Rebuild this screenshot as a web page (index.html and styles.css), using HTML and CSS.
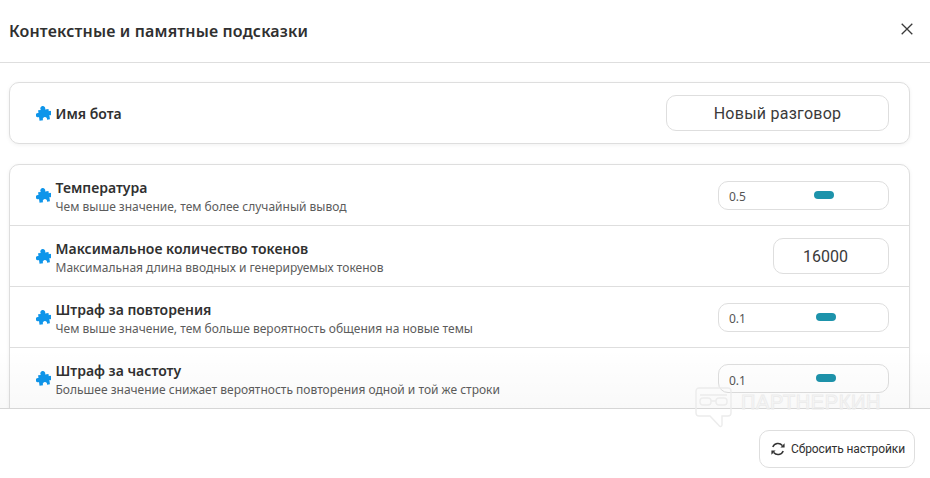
FILE: index.html
```html
<!DOCTYPE html>
<html lang="ru">
<head>
<meta charset="utf-8">
<title>Контекстные и памятные подсказки</title>
<link rel="stylesheet" href="styles.css">
</head>
<body>
<svg class="defs" width="0" height="0" aria-hidden="true">
  <symbol id="puzzle" viewBox="0 0 14 14"><path fill="currentColor" transform="rotate(-8 7 7)" d="M2.4 3.4H5a2.3 2.3 0 1 1 4 0H12.2V5.6a2 2 0 1 1 0 3.6V13.2H9.4a2 2 0 1 0-3.6 0H2.4V9.6a2 2 0 1 1 0-3.6Z"/></symbol>
</svg>
<div class="modal">
  <header class="head">
    <h1 class="title">Контекстные и памятные подсказки</h1>
    <button class="close" aria-label="Закрыть">
      <svg width="12" height="12" viewBox="0 0 12 12"><path d="M.7.7l10.6 10.6M11.3.7.7 11.3" stroke="#3a3a3a" stroke-width="1.3" fill="none"/></svg>
    </button>
  </header>
  <main class="body">
    <section class="card">
      <div class="row row-name">
        <svg class="puzzle"><use href="#puzzle"/></svg>
        <div class="label"><div class="name">Имя бота</div></div>
        <div class="field field-text">Новый разговор</div>
      </div>
    </section>
    <section class="card card-clipped">
      <div class="row">
        <svg class="puzzle"><use href="#puzzle"/></svg>
        <div class="label"><div class="name">Температура</div><div class="desc">Чем выше значение, тем более случайный вывод</div></div>
        <div class="slider"><span class="val">0.5</span><span class="thumb" style="margin-left:68px"></span></div>
      </div>
      <div class="row">
        <svg class="puzzle"><use href="#puzzle"/></svg>
        <div class="label"><div class="name">Максимальное количество токенов</div><div class="desc">Максимальная длина вводных и генерируемых токенов</div></div>
        <div class="field field-num">16000</div>
      </div>
      <div class="row">
        <svg class="puzzle"><use href="#puzzle"/></svg>
        <div class="label"><div class="name">Штраф за повторения</div><div class="desc">Чем выше значение, тем больше вероятность общения на новые темы</div></div>
        <div class="slider"><span class="val">0.1</span><span class="thumb" style="margin-left:70px"></span></div>
      </div>
      <div class="row">
        <svg class="puzzle"><use href="#puzzle"/></svg>
        <div class="label"><div class="name">Штраф за частоту</div><div class="desc">Большее значение снижает вероятность повторения одной и той же строки</div></div>
        <div class="slider"><span class="val">0.1</span><span class="thumb" style="margin-left:70px"></span></div>
      </div>
    </section>
    <div class="fade"></div>
  </main>
  <footer class="foot">
    <button class="reset">
      <svg width="14" height="14" viewBox="0 0 14 14" fill="none"><path d="M1.8 5A5.6 5.6 0 0 1 11.3 3.4" stroke="#333" stroke-width="1.5"/><path d="M12.2 9A5.6 5.6 0 0 1 2.7 10.6" stroke="#333" stroke-width="1.5"/><path d="M13.6 1.2v4.2H9.4zM.4 12.8V8.6h4.2z" fill="#333"/></svg>
      Сбросить настройки
    </button>
  </footer>
  <div class="mark" aria-hidden="true">
    <svg width="37" height="41" viewBox="0 0 37 41" fill="none" stroke="#ececec" stroke-width="1.4"><path d="M4 1h29a3 3 0 0 1 3 3v22a3 3 0 0 1-3 3h-6v9a1.5 1.5 0 0 1-2.6 1L15 29H4a3 3 0 0 1-3-3V4a3 3 0 0 1 3-3z"/><rect x="5" y="11" width="11" height="7" rx="3"/><rect x="21" y="11" width="11" height="7" rx="3"/><path d="M16 14h5M5 8h27"/></svg>
    <span class="mark-text">ПАРТНЕРКИН</span>
  </div>
</div>
</body>
</html>
```
FILE: styles.css
```css
* { box-sizing: border-box; }
html, body { margin: 0; height: 100%; }
body { background: #fff; font-family: "Noto Sans", sans-serif; color: #303030; overflow: hidden; }
.defs { position: absolute; }
.modal { position: relative; width: 930px; height: 478px; display: flex; flex-direction: column; }
.head { height: 63px; flex: none; display: flex; align-items: center; justify-content: space-between; padding: 0 17px 1px 9px; border-bottom: 1px solid #dedede; }
.title { margin: 0; font-size: 16px; font-weight: 600; line-height: 22px; letter-spacing: .16px; color: #303030; }
.close { display: flex; border: 0; background: none; padding: 0; margin-top: -4px; }
.body { position: relative; height: 346px; flex: none; overflow: hidden; padding: 19px 20px 0 9px; display: flex; flex-direction: column; gap: 20px; border-bottom: 1px solid #d6d6d6; }
.card { flex: none; border: 1px solid #dedede; border-radius: 10px; background: #fff; box-shadow: 0 1px 4px rgba(0,0,0,.06); }
.card-clipped { padding-bottom: 12px; }
.row { height: 61px; display: flex; align-items: center; padding: 0 20px 0 26px; border-bottom: 1px solid #dedede; }
.row:last-child { border-bottom: 0; }
.row-name { height: 60px; }
.puzzle { width: 15px; height: 15px; flex: none; color: #0e95ea; margin-right: 5px; }
.label { flex: 1; min-width: 0; padding-top: 2px; margin-left: -.5px; }
.row-name .label { padding-top: 0; }
.name { font-size: 14px; font-weight: 600; line-height: 19px; color: #303030; }
.desc { font-size: 12px; line-height: 17px; color: #5c5c5c; margin-top: 1px; }
.field { display: flex; align-items: center; justify-content: center; height: 36px; border: 1px solid #dedede; border-radius: 10px; font-family: Roboto, sans-serif; font-size: 16px; letter-spacing: .25px; color: #3a3a3a; background: #fff; }
.field-text { width: 223px; }
.field-num { width: 116px; padding-right: 11px; letter-spacing: 0; }
.slider { display: flex; align-items: center; width: 171px; height: 29px; border: 1px solid #dedede; border-radius: 10px; padding-left: 10px; background: #fff; }
.val { width: 17px; font-size: 12px; color: #555; padding-top: 3px; flex: none; }
.thumb { width: 20px; height: 8px; border-radius: 4px; background: #1d93ab; margin-bottom: 1px; }
.fade { position: absolute; left: 0; right: 0; bottom: 0; height: 60px; background: linear-gradient(to bottom, rgba(0,0,0,0), rgba(0,0,0,.025)); pointer-events: none; }
.foot { flex: 1; display: flex; justify-content: flex-end; align-items: flex-start; padding: 21px 15px 0 0; }
.reset { display: flex; align-items: center; gap: 6px; width: 156px; height: 38px; padding: 0 0 0 11px; border: 1px solid #dedede; border-radius: 10px; background: #fff; font-family: Roboto, sans-serif; font-size: 12px; letter-spacing: -.1px; color: #303030; }
.mark { position: absolute; left: 695px; top: 387px; display: flex; align-items: flex-start; gap: 9px; pointer-events: none; }
.mark-text { font-family: "Liberation Sans", sans-serif; font-size: 20px; line-height: 24px; letter-spacing: .6px; margin-top: 3px; color: transparent; -webkit-text-stroke: 1px #ececec; }
```
